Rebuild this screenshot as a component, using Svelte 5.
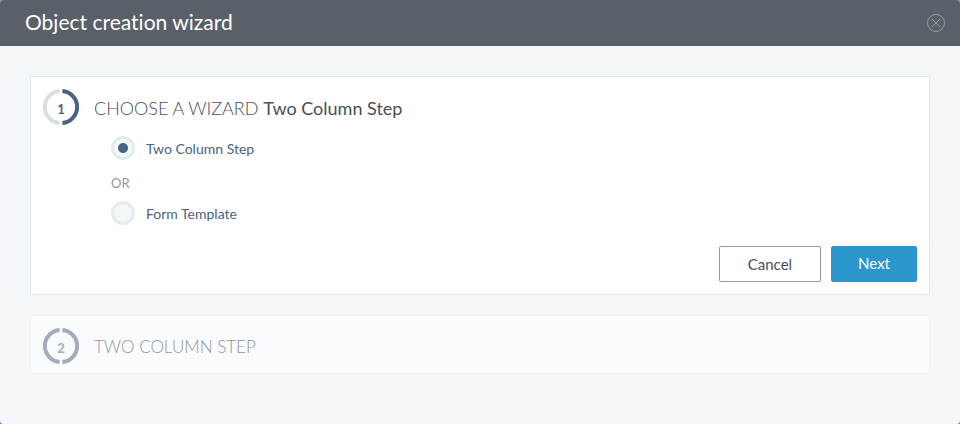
<script>
  let choice = $state('two-column');
  const options = [
    { value: 'two-column', label: 'Two Column Step' },
    { value: 'form', label: 'Form Template' }
  ];
</script>

{#snippet ring(number, left, right)}
  <span class="ring">
    <svg viewBox="0 0 36 36" width="36" height="36" fill="none" stroke-width="4" aria-hidden="true">
      <path d="M16.6 2.05A16 16 0 0 0 16.6 33.95" stroke={left} />
      <path d="M19.4 2.05A16 16 0 0 1 19.4 33.95" stroke={right} />
    </svg>
    <span class="number">{number}</span>
  </span>
{/snippet}

<div class="dialog">
  <header>
    <h1>Object creation wizard</h1>
    <button class="close" aria-label="Close">
      <svg viewBox="0 0 18 18" width="18" height="18" fill="none" stroke="#969ca2" aria-hidden="true">
        <circle cx="9" cy="9" r="8.5" />
        <path d="M5 5L13 13M13 5L5 13" />
      </svg>
    </button>
  </header>

  <main>
    <section class="card">
      <div class="heading">
        {@render ring(1, '#dadee4', '#4a6380')}
        <h2>CHOOSE A WIZARD <strong>Two Column Step</strong></h2>
      </div>
      <div class="options" role="radiogroup" aria-label="Choose a wizard">
        {#each options as option, i}
          {#if i > 0}<p>OR</p>{/if}
          <label>
            <input type="radio" name="wizard" value={option.value} bind:group={choice} />
            <span>{option.label}</span>
          </label>
        {/each}
      </div>
      <div class="actions">
        <button class="cancel">Cancel</button>
        <button class="next">Next</button>
      </div>
    </section>

    <section class="card pending">
      <div class="heading">
        {@render ring(2, '#a1adbc', '#a1adbc')}
        <h2>TWO COLUMN STEP</h2>
      </div>
    </section>
  </main>
</div>

<style>
  :global(body) {
    background: #8b8f93;
  }
  .dialog {
    min-height: 100vh;
    border-radius: 4px;
    overflow: hidden;
    background: #f3f7fa;
    color: #484f57;
    font-family: Lato, "Open Sans", sans-serif;
    font-variant-ligatures: none;
  }
  header {
    display: flex;
    align-items: center;
    justify-content: space-between;
    height: 46px;
    padding: 0 15px 0 25px;
    box-sizing: border-box;
    background: #596067;
  }
  h1 {
    margin: 0;
    padding-bottom: 2px;
    color: #fff;
    font-size: 21px;
    font-weight: 400;
    line-height: 28px;
  }
  button {
    font-family: inherit;
    cursor: pointer;
  }
  .close {
    display: flex;
    padding: 0;
    border: 0;
    background: none;
  }
  main {
    display: flex;
    flex-direction: column;
    gap: 20px;
    padding: 30px;
  }
  .card {
    padding: 12px;
    border: 1px solid #e4e9ed;
    background: #fff;
  }
  .heading {
    display: flex;
    align-items: center;
    gap: 15px;
  }
  .ring {
    display: grid;
    place-items: center;
    width: 36px;
    height: 36px;
  }
  .ring > * {
    grid-area: 1 / 1;
  }
  .number {
    padding-top: 4px;
    color: #4a6380;
    font-size: 13px;
    font-weight: 700;
    line-height: 16px;
  }
  h2 {
    margin: 0;
    padding-top: 2px;
    font-size: 18px;
    font-weight: 300;
    line-height: 24px;
  }
  strong {
    font-weight: 400;
  }
  .options {
    padding: 11px 0 0 68px;
    font-size: 14px;
    line-height: 20px;
  }
  label {
    display: flex;
    align-items: center;
    gap: 11px;
    width: fit-content;
    color: #4a6380;
  }
  label span {
    padding-top: 2px;
  }
  input {
    appearance: none;
    width: 24px;
    height: 24px;
    margin: 0;
    border: 3px solid #e5eaed;
    border-radius: 50%;
    background: #f3f7fa;
  }
  input:checked {
    background: radial-gradient(circle closest-side, #4a6380 50%, #f3f7fa 60%);
  }
  p {
    margin: 0;
    padding: 13px 0 8px;
    color: #91979d;
    font-size: 13px;
  }
  .actions {
    display: flex;
    justify-content: flex-end;
    gap: 10px;
    padding-top: 21px;
  }
  .actions button {
    height: 36px;
    padding: 0 28px;
    border: 1px solid #969ca1;
    border-radius: 2px;
    background: #fff;
    color: #484f57;
    font-size: 15px;
    line-height: 20px;
  }
  .actions .next {
    padding: 0 26px 2px;
    border-color: #2b96cd;
    background: #2b96cd;
    color: #fff;
  }
  .pending {
    padding-bottom: 9px;
    border-color: #eff3f6;
    background: #fafbfd;
  }
  .pending .number {
    color: #a1adbc;
  }
  .pending h2 {
    color: #91959a;
    font-size: 17px;
  }
</style>
